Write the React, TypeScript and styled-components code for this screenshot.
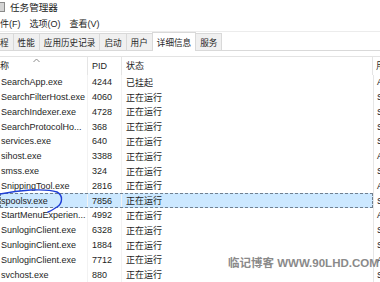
import React from 'react';
import styled, { createGlobalStyle } from 'styled-components';

const GlobalStyle = createGlobalStyle`
  html, body {
    margin: 0;
    padding: 0;
    background: #ffffff;
  }
  body {
    font-family: "Liberation Sans", "Noto Sans CJK SC", sans-serif;
  }
`;

const Window = styled.div`
  position: relative;
  width: 380px;
  height: 282px;
  overflow: hidden;
  background: #ffffff;
  color: #1e1e1e;
  display: flex;
  flex-direction: column;
  font-size: 9px;
`;

// title bar, window is partly off the left edge
const TitleBar = styled.div`
  height: 16px;
  display: flex;
  align-items: center;
  gap: 5px;
  padding-bottom: 2px;
  box-sizing: border-box;
  font-size: 9.6px;
  color: #1a1a1a;
`;

const AppIcon = styled.div`
  width: 9px;
  height: 8px;
  margin-left: -6px;
  border: 1px solid #8a8a8a;
  background: #d4d4d4;
`;

const MenuBar = styled.div`
  height: 16px;
  display: flex;
  align-items: center;
  gap: 9px;
  font-size: 9px;
`;

const MenuItem = styled.span`
  white-space: nowrap;
`;

const TabBar = styled.div`
  height: 20px;
  display: flex;
  align-items: flex-end;
  box-sizing: border-box;
  border-bottom: 1px solid #d9d9d9;
  box-shadow: inset 0 1px 0 #ececec;
`;

const Tab = styled.div<{ $active?: boolean; $first?: boolean }>`
  position: relative;
  height: ${p => (p.$active ? 19 : 17)}px;
  margin-bottom: ${p => (p.$active ? -1 : 0)}px;
  padding: 0 ${p => (p.$first ? 4 : 4)}px 0 ${p => (p.$first ? 0 : 4)}px;
  display: flex;
  align-items: center;
  box-sizing: border-box;
  border: 1px solid #d9d9d9;
  border-bottom: none;
  border-left: ${p => (p.$first ? 'none' : '1px solid #d9d9d9')};
  margin-left: ${p => (p.$first ? 0 : -1)}px;
  background: ${p => (p.$active ? '#ffffff' : '#f0f0f0')};
  z-index: ${p => (p.$active ? 2 : 1)};
  font-size: 8.6px;
  white-space: nowrap;
`;

const Table = styled.div`
  margin-top: 5px;
  display: flex;
  flex-direction: column;
`;

const HeaderRow = styled.div`
  display: flex;
  height: 19px;
  box-sizing: border-box;
  border-top: 1px solid #e3e3e3;
  font-size: 9px;
`;

const Row = styled.div`
  display: flex;
  height: 14.8px;
`;

const MainCols = styled.div<{ $selected?: boolean }>`
  width: 373px;
  flex: none;
  display: grid;
  grid-template-columns: 88px 34px 1fr;
  box-sizing: border-box;
  background: ${p => (p.$selected ? '#cce8ff' : 'transparent')};
  outline: ${p => (p.$selected ? '1px dashed #6f7f8f' : 'none')};
  outline-offset: -1px;
`;

const HeadCell = styled.div<{ $pad?: number }>`
  position: relative;
  display: flex;
  align-items: center;
  padding-left: ${p => p.$pad ?? 4}px;
  border-right: 1px solid #e5e5e5;
  white-space: nowrap;
  overflow: hidden;
`;

const Cell = styled.div<{ $pad?: number; $line?: boolean }>`
  display: flex;
  align-items: center;
  padding-left: ${p => p.$pad ?? 4}px;
  border-right: ${p => (p.$line ? '1px solid #f2f2f2' : 'none')};
  white-space: nowrap;
  overflow: hidden;
`;

const UserCell = styled.div<{ $head?: boolean }>`
  flex: 1;
  display: flex;
  align-items: center;
  padding-left: 3px;
  border-left: ${p => (p.$head ? 'none' : '1px solid #e6e6e6')};
  white-space: nowrap;
  overflow: hidden;
`;

const SortCaret = styled.svg`
  position: absolute;
  left: 33px;
  top: 1px;
`;

const Scribble = styled.svg`
  position: absolute;
  left: 0;
  top: 0;
  pointer-events: none;
  z-index: 5;
`;

const Watermark = styled.div`
  position: absolute;
  left: 228px;
  top: 254px;
  font-family: "Liberation Sans", "Noto Sans CJK SC", sans-serif;
  font-weight: bold;
  font-size: 11.5px;
  color: #8a8a8a;
  white-space: nowrap;
  z-index: 4;
`;

type Proc = { name: string; pid: string; status: string; user: string };

const procs: Proc[] = [
  { name: 'SearchApp.exe', pid: '4244', status: '已挂起', user: 'Administrator' },
  { name: 'SearchFilterHost.exe', pid: '4060', status: '正在运行', user: 'SYSTEM' },
  { name: 'SearchIndexer.exe', pid: '4728', status: '正在运行', user: 'SYSTEM' },
  { name: 'SearchProtocolHo...', pid: '368', status: '正在运行', user: 'SYSTEM' },
  { name: 'services.exe', pid: '640', status: '正在运行', user: 'SYSTEM' },
  { name: 'sihost.exe', pid: '3388', status: '正在运行', user: 'Administrator' },
  { name: 'smss.exe', pid: '324', status: '正在运行', user: 'SYSTEM' },
  { name: 'SnippingTool.exe', pid: '2816', status: '正在运行', user: 'Administrator' },
  { name: 'spoolsv.exe', pid: '7856', status: '正在运行', user: 'SYSTEM' },
  { name: 'StartMenuExperien...', pid: '4992', status: '正在运行', user: 'Administrator' },
  { name: 'SunloginClient.exe', pid: '6328', status: '正在运行', user: 'SYSTEM' },
  { name: 'SunloginClient.exe', pid: '1884', status: '正在运行', user: 'SYSTEM' },
  { name: 'SunloginClient.exe', pid: '7712', status: '正在运行', user: 'Administrator' },
  { name: 'svchost.exe', pid: '880', status: '正在运行', user: 'SYSTEM' },
];

const tabs = ['性能', '应用历史记录', '启动', '用户', '详细信息', '服务'];

const App = () => {
  return (
    <Window>
      <GlobalStyle />
      <TitleBar>
        <AppIcon />
        <span>任务管理器</span>
      </TitleBar>

      <MenuBar>
        <MenuItem>件(F)</MenuItem>
        <MenuItem>选项(O)</MenuItem>
        <MenuItem>查看(V)</MenuItem>
      </MenuBar>

      <TabBar>
        <Tab $first>程</Tab>
        {tabs.map(t => (
          <Tab key={t} $active={t === '详细信息'}>{t}</Tab>
        ))}
      </TabBar>

      <Table>
        <HeaderRow>
          <MainCols>
            <HeadCell $pad={0}>
              称
              <SortCaret width="7" height="5" viewBox="0 0 7 5">
                <path d="M0.5 4 L3.5 1 L6.5 4" fill="none" stroke="#8a8a8a" strokeWidth="1" />
              </SortCaret>
            </HeadCell>
            <HeadCell>PID</HeadCell>
            <HeadCell>状态</HeadCell>
          </MainCols>
          <UserCell $head>用户名</UserCell>
        </HeaderRow>

        {procs.map((p, i) => (
          <Row key={p.pid + i}>
            <MainCols $selected={p.name === 'spoolsv.exe'}>
              <Cell $pad={1} $line>{p.name}</Cell>
              <Cell $line>{p.pid}</Cell>
              <Cell>{p.status}</Cell>
            </MainCols>
            <UserCell>{p.user}</UserCell>
          </Row>
        ))}
      </Table>

      <Scribble width="80" height="230" viewBox="0 0 80 230">
        <path
          d="M-2 194.5 C 18 190, 45 188, 57 192 C 63 195, 63 203, 57 207 C 54 209, 51 211, 48 212"
          fill="none"
          stroke="#1f3fd6"
          strokeWidth="1.4"
          strokeLinecap="round"
        />
      </Scribble>

      <Watermark>临记博客 WWW.90LHD.COM</Watermark>
    </Window>
  );
};

export default App;
